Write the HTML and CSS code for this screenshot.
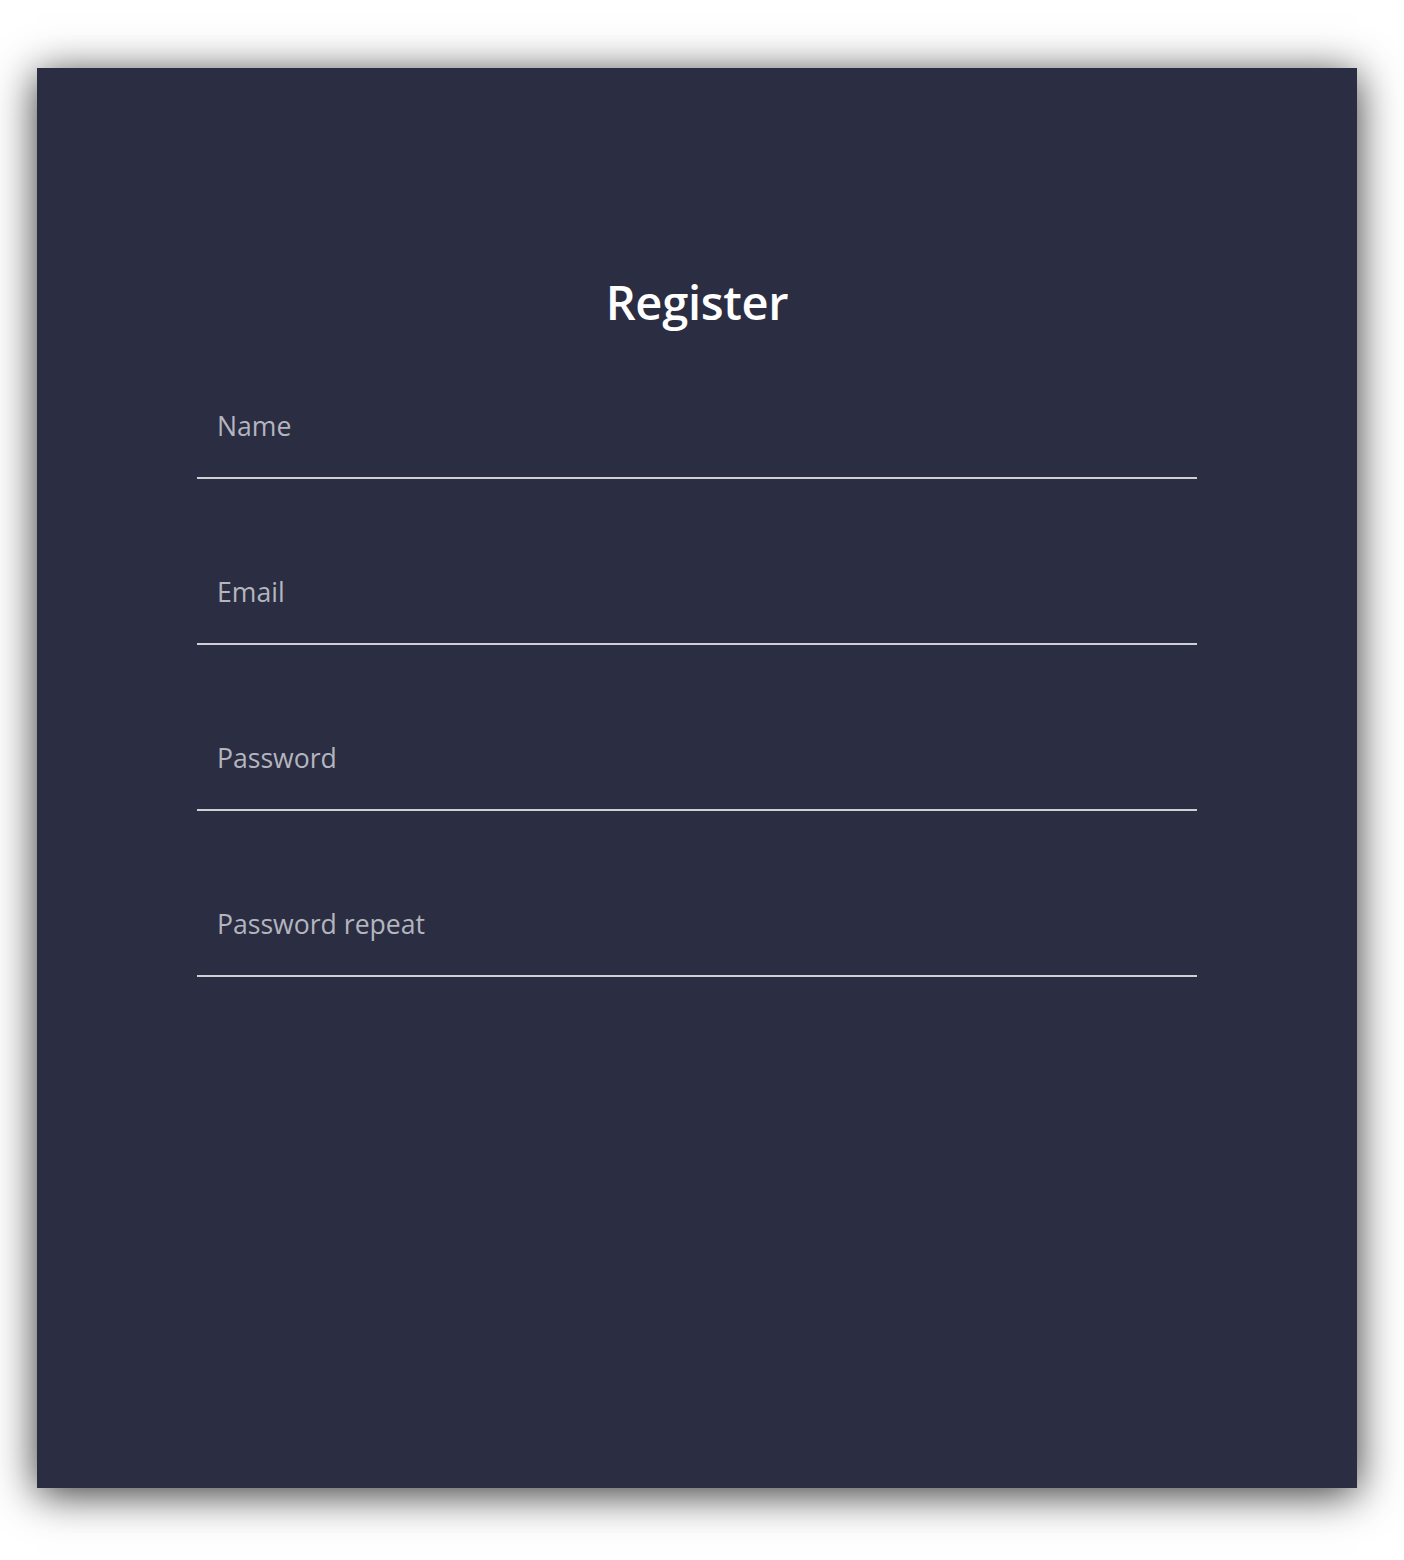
FILE: index.html
```html
<!DOCTYPE html>
<html>
<head>
<meta charset="utf-8">
<link rel="stylesheet" href="styles.css">
</head>
<body>
<div class="page">
  <div class="card">
    <h1 class="title">Register</h1>
    <form class="form">
      <div class="field"><span class="placeholder">Name</span></div>
      <div class="field"><span class="placeholder">Email</span></div>
      <div class="field"><span class="placeholder">Password</span></div>
      <div class="field"><span class="placeholder">Password repeat</span></div>
    </form>
  </div>
</div>
</body>
</html>
```
FILE: styles.css
```css
html, body {
  margin: 0;
  padding: 0;
  background: #ffffff;
}
body {
  font-family: "Open Sans", "Liberation Sans", sans-serif;
}
.page {
  padding: 68px 47px 72px 37px;
}
.card {
  width: 1320px;
  height: 1420px;
  box-sizing: border-box;
  background: #2b2d42;
  box-shadow: 0 6px 40px rgba(0, 0, 0, 0.8);
  padding-top: 202px;
  display: flex;
  flex-direction: column;
  align-items: center;
}
.title {
  margin: 0;
  color: #ffffff;
  font-size: 47px;
  font-weight: 600;
  line-height: 64px;
  letter-spacing: -0.3px;
}
.form {
  margin-top: 41px;
  width: 1000px;
  display: flex;
  flex-direction: column;
  gap: 62px;
}
.field {
  height: 104px;
  box-sizing: border-box;
  border-bottom: 2px solid #cfcfd4;
  padding: 0 20px 1px;
  display: flex;
  align-items: center;
}
.placeholder {
  color: #b4b5bf;
  font-size: 26.6px;
  line-height: 36px;
}
```
